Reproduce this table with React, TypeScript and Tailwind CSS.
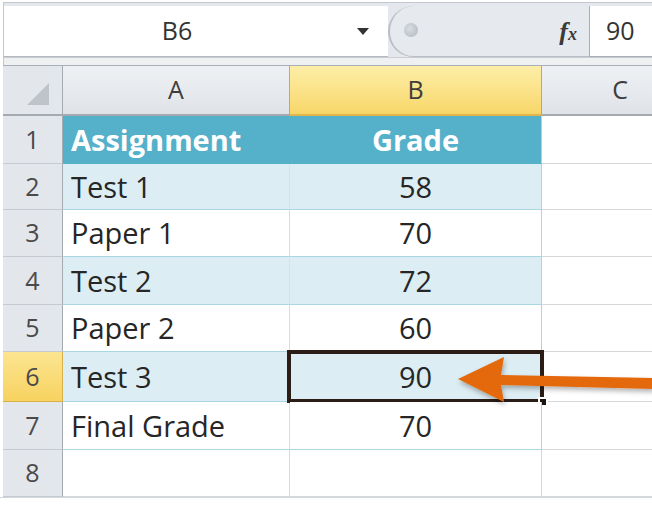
import React from "react";

type Row = {
  num: number;
  a: string;
  b: string;
  h: string;
  kind: "head" | "band" | "plain" | "empty";
};

const rows: Row[] = [
  { num: 1, a: "Assignment", b: "Grade", h: "h-[48px]", kind: "head" },
  { num: 2, a: "Test 1", b: "58", h: "h-[46px]", kind: "band" },
  { num: 3, a: "Paper 1", b: "70", h: "h-[47px]", kind: "plain" },
  { num: 4, a: "Test 2", b: "72", h: "h-[48px]", kind: "band" },
  { num: 5, a: "Paper 2", b: "60", h: "h-[47px]", kind: "plain" },
  { num: 6, a: "Test 3", b: "90", h: "h-[50px]", kind: "band" },
  { num: 7, a: "Final Grade", b: "70", h: "h-[48px]", kind: "plain" },
  { num: 8, a: "", b: "", h: "h-[47px]", kind: "empty" },
];

function cellTone(kind: Row["kind"]) {
  if (kind === "head") return "bg-[#55b0ca] text-white font-bold border-[#55b0ca]";
  if (kind === "band") return "bg-[#dcedf3] text-[#262626] border-[#a9d6e3]";
  if (kind === "plain") return "bg-white text-[#262626] border-[#a9d6e3]";
  return "bg-white text-[#262626] border-[#d6d9dc]";
}

function FormulaBar() {
  return (
    <div className="ml-[3px] mt-[2px] border-l border-t border-[#c3c8ce] bg-[#e4e7eb]">
      <div className="flex h-[54px] pt-[3px]">
        <div className="flex w-[384px] items-center border-b border-[#b4b9c0] bg-white">
          <span className="flex-1 pr-[6px] text-center text-[25px] text-[#333]">B6</span>
          <svg width="14" height="9" viewBox="0 0 14 9" className="mr-[18px]">
            <path d="M1 1h12L7 8z" fill="#333" />
          </svg>
        </div>
        <div className="relative flex w-[201px] items-center justify-end rounded-l-[30px] border-b border-l-2 border-[#b9bec5] bg-[#e6e9ed] pr-[12px]">
          <span className="absolute left-[14px] top-[17px] h-[14px] w-[14px] rounded-full bg-[radial-gradient(circle_at_40%_40%,#d9dde2,#b1b6bd)]" />
          <span
            className="text-[26px] italic font-bold text-[#3a3a3a]"
            style={{ fontFamily: "'Liberation Serif', serif" }}
          >
            f<span className="text-[18px]">x</span>
          </span>
        </div>
        <div className="flex flex-1 items-center border-b border-l border-[#a8aeb5] bg-white pl-[16px] text-[25px] text-[#333]">
          90
        </div>
      </div>
      <div className="h-[8px] border-t border-[#c9cdd2] bg-[#eef0f2]" />
    </div>
  );
}

export default function App() {
  return (
    <div
      className="relative h-[508px] w-[652px] overflow-hidden bg-white"
      style={{ fontFamily: "'Open Sans', 'Noto Sans', sans-serif" }}
    >
      <FormulaBar />
      <div className="ml-[3px] grid grid-cols-[60px_227px_252px_156px] border-t border-[#a9afb7]">
        {/* column headers */}
        <div className="relative h-[50px] border-b-2 border-r border-[#a3aab2] bg-[#e3e6ea]">
          <svg width="24" height="24" viewBox="0 0 24 24" className="absolute bottom-[8px] right-[12px]">
            <path d="M23 1V23H1z" fill="#bfc4ca" />
          </svg>
        </div>
        <div className="flex h-[50px] items-center justify-center border-b-2 border-r border-[#a3aab2] bg-gradient-to-b from-[#eff1f4] to-[#dfe3e8] text-[25px] text-[#3d3d3d]">
          A
        </div>
        <div className="flex h-[50px] items-center justify-center border-b-2 border-r border-b-[#e2b54a] border-r-[#c9a94a] bg-gradient-to-b from-[#fdeea7] to-[#f8d768] text-[25px] text-[#3d3d3d]">
          B
        </div>
        <div className="flex h-[50px] items-center justify-center border-b-2 border-[#a3aab2] bg-gradient-to-b from-[#eff1f4] to-[#dfe3e8] text-[25px] text-[#3d3d3d]">
          C
        </div>

        {rows.map((row) => {
          const tone = cellTone(row.kind);
          const selected = row.num === 6;
          return (
            <React.Fragment key={row.num}>
              <div
                className={`flex ${row.h} items-center justify-center border-b border-r text-[25px] text-[#4a4a4a] ${
                  selected
                    ? "border-b-[#d9b14a] border-r-[#d9b14a] bg-gradient-to-b from-[#fce590] to-[#f7d25f]"
                    : "border-b-[#c5cad0] border-r-[#a3aab2] bg-[#e3e6ea]"
                }`}
              >
                {row.num}
              </div>
              <div
                className={`flex ${row.h} items-center border-b border-r pl-[8px] text-[29px] ${tone} ${
                  row.kind === "plain" ? "border-r-[#dcdcdc]" : ""
                } ${row.kind === "band" ? "border-r-[#cfe4eb]" : ""}`}
              >
                {row.a}
              </div>
              <div
                className={`relative flex ${row.h} items-center justify-center border-b border-r text-[29px] ${tone} ${
                  row.kind === "empty" ? "" : "border-r-[#a9d6e3]"
                }`}
              >
                {row.b}
                {selected ? (
                  <>
                    <span className="absolute -bottom-[2px] -left-[3px] -right-[3px] -top-[2px] border-[4px] border-[#2c1c16]" />
                    <span className="absolute -bottom-[6px] -right-[7px] h-[10px] w-[10px] border-2 border-white bg-[#1e1410]" />
                  </>
                ) : null}
              </div>
              <div className={`${row.h} border-b border-[#d6d9dc] bg-white`} />
            </React.Fragment>
          );
        })}
      </div>
      <div className="h-[4px] border-t border-[#d4d7db]" />

      {/* orange arrow */}
      <svg
        width="200"
        height="60"
        viewBox="0 0 200 60"
        className="absolute left-[454px] top-[353px]"
      >
        <defs>
          <filter id="sh" x="-10%" y="-30%" width="130%" height="180%">
            <feDropShadow dx="1" dy="3" stdDeviation="2.5" floodColor="#000" floodOpacity="0.3" />
          </filter>
        </defs>
        <path
          d="M4 26 L50 4 L47 22 L200 25 L200 36 L47 32 L50 49 Z"
          fill="#e4690c"
          filter="url(#sh)"
        />
      </svg>
    </div>
  );
}
